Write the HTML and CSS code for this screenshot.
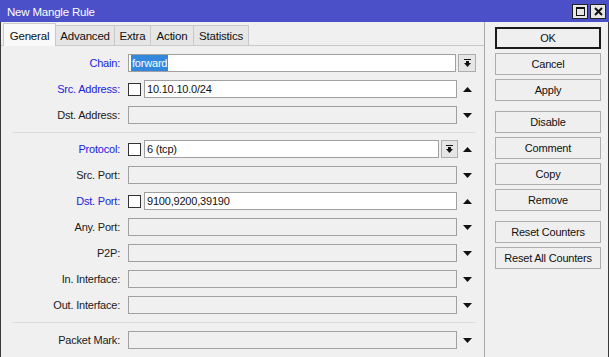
FILE: index.html
```html
<!DOCTYPE html>
<html>
<head>
<meta charset="utf-8">
<link rel="stylesheet" href="styles.css">
</head>
<body>
<div class="win">
  <div class="titlebar">
    <span class="title">New Mangle Rule</span>
    <div class="tbtns">
      <span class="tbtn"><svg width="9" height="9" viewBox="0 0 9 9"><rect x="0.5" y="0.5" width="8" height="8" fill="none" stroke="#111" stroke-width="1"/><rect x="0" y="0" width="9" height="2" fill="#111"/></svg></span>
      <span class="tbtn"><svg width="9" height="9" viewBox="0 0 9 9"><path d="M1 1 L8 8 M8 1 L1 8" stroke="#111" stroke-width="2" fill="none"/></svg></span>
    </div>
  </div>
  <div class="body">
    <div class="left">
      <div class="tabs">
        <span class="tab active t-gen">General</span>
        <span class="tab t-adv">Advanced</span>
        <span class="tab t-ext">Extra</span>
        <span class="tab t-act">Action</span>
        <span class="tab t-sta">Statistics</span>
      </div>
      <div class="panel">
        <div class="row">
          <span class="lbl blue">Chain:</span>
          <span class="inp on"><span class="sel">forward</span></span>
          <span class="dd"><svg width="7" height="8" viewBox="0 0 7 8"><rect x="0" y="0" width="7" height="1" fill="#111"/><rect x="2" y="2" width="3" height="2" fill="#111"/><polygon points="0,4 7,4 3.5,8" fill="#111"/></svg></span>
        </div>
        <div class="row">
          <span class="lbl blue">Src. Address:</span>
          <span class="cb"></span>
          <span class="inp on">10.10.10.0/24</span>
          <span class="arr"><svg width="9" height="5" viewBox="0 0 9 5"><polygon points="0,5 9,5 4.5,0" fill="#111"/></svg></span>
        </div>
        <div class="row">
          <span class="lbl">Dst. Address:</span>
          <span class="inp"></span>
          <span class="arr"><svg width="9" height="5" viewBox="0 0 9 5"><polygon points="0,0 9,0 4.5,5" fill="#111"/></svg></span>
        </div>
        <div class="sep"></div>
        <div class="row">
          <span class="lbl blue">Protocol:</span>
          <span class="cb"></span>
          <span class="inp on">6 (tcp)</span>
          <span class="dd small"><svg width="7" height="8" viewBox="0 0 7 8"><rect x="0" y="0" width="7" height="1" fill="#111"/><rect x="2" y="2" width="3" height="2" fill="#111"/><polygon points="0,4 7,4 3.5,8" fill="#111"/></svg></span>
          <span class="arr n"><svg width="9" height="5" viewBox="0 0 9 5"><polygon points="0,5 9,5 4.5,0" fill="#111"/></svg></span>
        </div>
        <div class="row">
          <span class="lbl">Src. Port:</span>
          <span class="inp"></span>
          <span class="arr"><svg width="9" height="5" viewBox="0 0 9 5"><polygon points="0,0 9,0 4.5,5" fill="#111"/></svg></span>
        </div>
        <div class="row">
          <span class="lbl blue">Dst. Port:</span>
          <span class="cb"></span>
          <span class="inp on">9100,9200,39190</span>
          <span class="arr"><svg width="9" height="5" viewBox="0 0 9 5"><polygon points="0,5 9,5 4.5,0" fill="#111"/></svg></span>
        </div>
        <div class="row">
          <span class="lbl">Any. Port:</span>
          <span class="inp"></span>
          <span class="arr"><svg width="9" height="5" viewBox="0 0 9 5"><polygon points="0,0 9,0 4.5,5" fill="#111"/></svg></span>
        </div>
        <div class="row">
          <span class="lbl">P2P:</span>
          <span class="inp"></span>
          <span class="arr"><svg width="9" height="5" viewBox="0 0 9 5"><polygon points="0,0 9,0 4.5,5" fill="#111"/></svg></span>
        </div>
        <div class="row">
          <span class="lbl">In. Interface:</span>
          <span class="inp"></span>
          <span class="arr"><svg width="9" height="5" viewBox="0 0 9 5"><polygon points="0,0 9,0 4.5,5" fill="#111"/></svg></span>
        </div>
        <div class="row">
          <span class="lbl">Out. Interface:</span>
          <span class="inp"></span>
          <span class="arr"><svg width="9" height="5" viewBox="0 0 9 5"><polygon points="0,0 9,0 4.5,5" fill="#111"/></svg></span>
        </div>
        <div class="sep sep2"></div>
        <div class="row">
          <span class="lbl">Packet Mark:</span>
          <span class="inp"></span>
          <span class="arr"><svg width="9" height="5" viewBox="0 0 9 5"><polygon points="0,0 9,0 4.5,5" fill="#111"/></svg></span>
        </div>
      </div>
    </div>
    <div class="right">
      <div class="grp">
        <span class="btn def">OK</span>
        <span class="btn">Cancel</span>
        <span class="btn">Apply</span>
      </div>
      <div class="grp">
        <span class="btn">Disable</span>
        <span class="btn">Comment</span>
        <span class="btn">Copy</span>
        <span class="btn">Remove</span>
      </div>
      <div class="grp">
        <span class="btn">Reset Counters</span>
        <span class="btn">Reset All Counters</span>
      </div>
    </div>
  </div>
</div>
</body>
</html>
```
FILE: styles.css
```css
* { box-sizing: border-box; }
html, body { margin: 0; padding: 0; }
body {
  font-family: "Liberation Sans", Arial, sans-serif;
  font-size: 11px;
  letter-spacing: -0.2px;
  color: #111;
  background: #f0f0f0;
}
.win {
  width: 609px;
  height: 357px;
  overflow: hidden;
  background: #f0f0f0;
}
.titlebar {
  height: 22px;
  background: #4b4fc8;
  display: flex;
  align-items: center;
  justify-content: space-between;
  padding: 0 3px 0 7px;
}
.title {
  color: #fff;
  font-size: 11.5px;
  padding-top: 1px;
}
.tbtns { display: flex; gap: 2px; align-items: center; }
.tbtn {
  width: 16px;
  height: 15px;
  background: #e6e6e6;
  border: 1px solid #222;
  display: flex;
  align-items: center;
  justify-content: center;
}
.body {
  display: flex;
  height: 335px;
  border-left: 1px solid #3a3a3a;
  border-right: 1px solid #3a3a3a;
}
.left {
  width: 484px;
  border-right: 1px solid #a9a9a9;
  display: flex;
  flex-direction: column;
}
.tabs {
  display: flex;
  align-items: flex-end;
  padding: 2px 0 0 2px;
  height: 23px;
}
.tab {
  height: 20px;
  background: #e6e6e6;
  border: 1px solid #c9c9c9;
  border-bottom: none;
  margin-left: -1px;
  display: flex;
  align-items: center;
  justify-content: center;
  padding-top: 1px;
  font-size: 11.5px;
}
.tab:first-child { margin-left: 0; }
.t-gen { width: 53px; }
.t-adv { width: 60px; }
.t-ext { width: 37px; }
.t-act { width: 44px; }
.t-sta { width: 56px; }
.tab.active {
  height: 23px;
  background: #f9f9f9;
  position: relative;
  z-index: 1;
  margin-bottom: -1px;
}
.panel {
  border-top: 1px solid #c9c9c9;
  padding: 8px 8px 0 0;
  flex: 1;
}
.row {
  display: flex;
  align-items: center;
  height: 18px;
  margin-bottom: 8px;
}
.lbl {
  width: 127px;
  flex: none;
  text-align: right;
  padding-right: 8px;
  color: #1a1a1a;
}
.lbl.blue { color: #2222dd; }
.cb {
  width: 13px;
  height: 13px;
  flex: none;
  border: 1px solid #333;
  background: #fff;
  margin-right: 3px;
}
.inp {
  flex: 1;
  height: 18px;
  border: 1px solid #a0a0a0;
  background: #f0f0f0;
  padding: 0 2px;
  display: flex;
  align-items: center;
  white-space: nowrap;
}
.inp.on { background: #fff; }
.sel {
  background: #3388dd;
  color: #fff;
  padding: 1px 1px;
  line-height: 14px;
}
.dd {
  flex: none;
  width: 18px;
  height: 18px;
  margin-left: 2px;
  border: 1px solid #adadad;
  background: #e6e6e6;
  display: flex;
  align-items: center;
  justify-content: center;
}
.dd.small { width: 17px; }
.arr {
  flex: none;
  width: 19px;
  height: 18px;
  display: flex;
  align-items: center;
  justify-content: center;
  padding-left: 1px;
}
.arr.n { width: 18px; padding-left: 0; }
.sep {
  height: 1px;
  background: #dcdcdc;
  margin: 1px 0 7px 11px;
}
.sep2 { margin-top: 2px; margin-bottom: 8px; }
.right {
  flex: 1;
  padding: 5px 0 0 10px;
  display: flex;
  flex-direction: column;
}
.grp {
  display: flex;
  flex-direction: column;
  gap: 4px;
  margin-bottom: 10px;
}
.btn {
  width: 106px;
  height: 22px;
  border: 1px solid #adadad;
  background: #efefef;
  display: flex;
  align-items: center;
  justify-content: center;
  color: #111;
}
.btn.def { border: 2px solid #1a1a1a; }
```
